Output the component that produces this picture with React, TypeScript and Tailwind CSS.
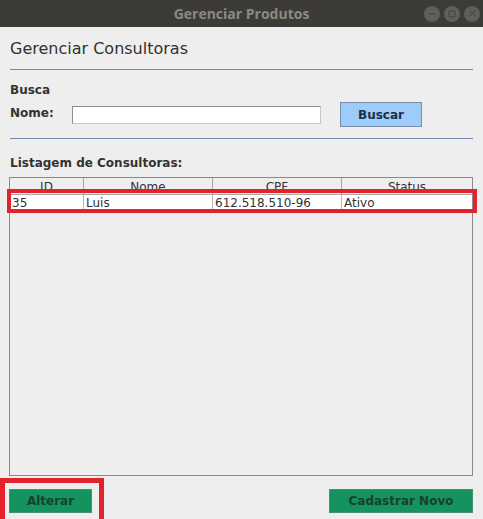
import { Minus, Square, X } from "lucide-react";

const rows = [{ id: "35", nome: "Luis", cpf: "612.518.510-96", status: "Ativo" }];

const cols = [
  { key: "id", label: "ID", w: "w-[74px]" },
  { key: "nome", label: "Nome", w: "w-[129px]" },
  { key: "cpf", label: "CPF", w: "w-[129px]" },
  { key: "status", label: "Status", w: "flex-1" },
] as const;

export default function App() {
  return (
    <div
      className="relative w-[483px] h-[519px] overflow-hidden bg-[#eeeeee] flex flex-col text-[#333333]"
      style={{ fontFamily: '"DejaVu Sans", sans-serif' }}
    >
      {/* barra de título */}
      <div className="h-[27px] shrink-0 bg-[#3c3b37] grid grid-cols-[1fr_auto_1fr] items-center">
        <div />
        <div
          className="text-[14px] font-bold text-[#8a8983] leading-none"
          style={{ fontFamily: '"Open Sans", sans-serif' }}
        >
          Gerenciar Produtos
        </div>
        <div className="flex justify-end gap-[4px] pr-[3px]">
          <span className="w-[16px] h-[16px] rounded-full bg-[#5f5e5a] flex items-center justify-center">
            <Minus size={10} strokeWidth={2.5} className="text-[#3e3d39]" />
          </span>
          <span className="w-[16px] h-[16px] rounded-full bg-[#5f5e5a] flex items-center justify-center">
            <Square size={8} strokeWidth={2.5} className="text-[#3e3d39]" />
          </span>
          <span className="w-[16px] h-[16px] rounded-full bg-[#5f5e5a] flex items-center justify-center">
            <X size={9} strokeWidth={2.5} className="text-[#3e3d39]" />
          </span>
        </div>
      </div>

      <div className="px-[10px] flex flex-col">
        <h1 className="mt-[12px] text-[16px] leading-[19px] font-normal">Gerenciar Consultoras</h1>
        <div className="mt-[11px] h-px bg-[#7489ad]" />

        <div className="mt-[13px] text-[12px] leading-[14px] font-bold">Busca</div>
        <div className="mt-[5px] flex items-start">
          <label className="w-[62px] mt-[4px] text-[12px] leading-[14px] font-bold">Nome:</label>
          <input
            className="w-[249px] h-[18px] mt-[4px] bg-white border border-[#8e8e8e] border-r-[#c6c6c6] border-b-[#c6c6c6] outline-none text-[12px] px-1"
            defaultValue=""
          />
          <button className="ml-[19px] w-[82px] h-[25px] bg-[#9dcbfa] border border-[#7b8ea8] text-[12px] font-bold text-[#1d2f48]">
            Buscar
          </button>
        </div>
        <div className="mt-[11px] h-px bg-[#7489ad]" />

        <div className="mt-[17px] text-[12px] leading-[14px] font-bold">Listagem de Consultoras:</div>

        {/* tabela */}
        <div className="mt-[7px] -ml-px w-[464px] h-[299px] border border-[#8a8a8a] flex flex-col">
          <div className="flex h-[17px] shrink-0 bg-[#eeeeee] border-b border-[#a8a8a8]">
            {cols.map((c, i) => (
              <div
                key={c.key}
                className={`${c.w} pt-[2px] text-center text-[12px] leading-[15px] ${i < cols.length - 1 ? "border-r border-[#a8a8a8]" : ""}`}
              >
                {c.label}
              </div>
            ))}
          </div>
          {rows.map(r => (
            <div key={r.id} className="flex h-[16px] bg-white border-b border-[#d4d4d4]">
              {cols.map((c, i) => (
                <div
                  key={c.key}
                  className={`${c.w} pl-[2px] text-[12px] leading-[16px] ${i < cols.length - 1 ? "border-r border-[#b8b8b8]" : ""}`}
                >
                  {r[c.key]}
                </div>
              ))}
            </div>
          ))}
          <div className="flex-1 bg-[#eeeeee]" />
        </div>

        <div className="mt-[13px] -ml-px flex justify-between">
          <button className="w-[83px] h-[24px] bg-[#14935f] border border-[#4f8d70] text-[12px] font-bold text-[#1a3e2f]">
            Alterar
          </button>
          <button className="w-[144px] h-[24px] bg-[#14935f] border border-[#4f8d70] text-[12px] font-bold text-[#1a3e2f]">
            Cadastrar Novo
          </button>
        </div>
      </div>

      {/* destaques em vermelho (anotação sobre a tela) */}
      <div className="absolute left-[7px] top-[189px] w-[470px] h-[24px] border-[4px] border-[#e3222b] pointer-events-none" />
      <div className="absolute left-0 top-[478px] w-[104px] h-[50px] border-[5px] border-[#e3222b] pointer-events-none" />
    </div>
  );
}
